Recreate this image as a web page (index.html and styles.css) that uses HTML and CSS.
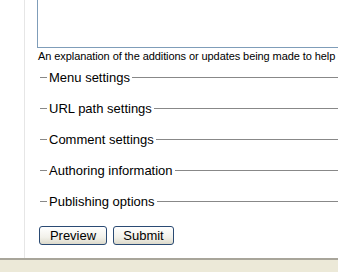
FILE: index.html
```html
<!DOCTYPE html>
<html lang="en">
<head>
    <meta charset="UTF-8">
    <title>Edit page</title>
    <link rel="stylesheet" href="styles.css">
</head>
<body>
    <div class="page">
        <div class="content">
            <!-- log message box, scrolled so only its bottom shows -->
            <div class="textarea"></div>
            <div class="description">An explanation of the additions or updates being made to help</div>

            <!-- collapsed fieldsets -->
            <div class="fieldset"><span class="legend">Menu settings</span></div>
            <div class="fieldset"><span class="legend">URL path settings</span></div>
            <div class="fieldset"><span class="legend">Comment settings</span></div>
            <div class="fieldset"><span class="legend">Authoring information</span></div>
            <div class="fieldset"><span class="legend">Publishing options</span></div>

            <div class="buttons">
                <button type="button" class="btn btn-preview">Preview</button>
                <button type="button" class="btn btn-submit">Submit</button>
            </div>
        </div>
    </div>
</body>
</html>
```

FILE: styles.css
```css
body {
    margin: 0;
    padding: 0;
    background-color: #ece9d8;
    font-family: "Liberation Sans", Arial, sans-serif;
    color: #000;
}

.page {
    height: 258px;
    background-color: #fff;
    border-bottom: 2px solid #a8a59a;
    padding-left: 24px;
    overflow: hidden;
}

.content {
    height: 100%;
    border-left: 1px solid #e6e6e6;
    padding-left: 12px;
}

.textarea {
    height: 47px;
    border-left: 1px solid #7f9db9;
    border-bottom: 1px solid #7f9db9;
    background-color: #fff;
}

.description {
    font-size: 11px;
    line-height: 13px;
    letter-spacing: -0.08px;
    padding: 2px 0 0 1px;
    height: 12px;
    white-space: nowrap;
}

.fieldset {
    display: flex;
    align-items: center;
    height: 31px;
    margin-left: 3px;
}

.fieldset::before,
.fieldset::after {
    content: "";
    border-top: 1px solid #888;
}

.fieldset::before {
    width: 7px;
}

.fieldset::after {
    flex: 1;
}

.legend {
    font-size: 13px;
    line-height: 15px;
    padding: 0 2px;
    white-space: nowrap;
}

.buttons {
    display: flex;
    gap: 6px;
    margin-top: 9px;
    padding-left: 2px;
}

.btn {
    height: 19px;
    padding: 0 9px;
    font-family: "Liberation Sans", Arial, sans-serif;
    font-size: 13px;
    line-height: 15px;
    color: #000;
    border: 1px solid #2a4a73;
    border-radius: 3px;
    background: linear-gradient(#ffffff, #f2f1ea 60%, #dcd9cb);
}

.btn-preview {
    width: 68px;
}

.btn-submit {
    width: 61px;
}
```
